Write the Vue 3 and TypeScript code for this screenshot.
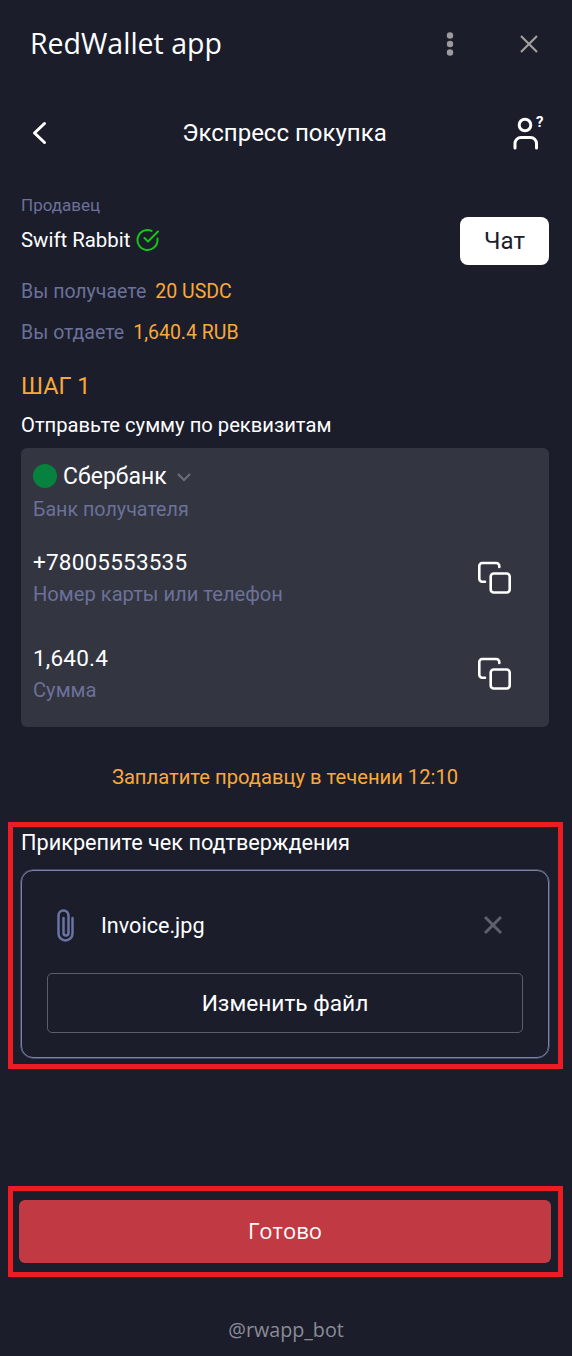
<script setup lang="ts">
const details = [
  { value: '+78005553535', label: 'Номер карты или телефон' },
  { value: '1,640.4', label: 'Сумма' },
]
</script>

<template>
  <div class="page">
    <header class="top">
      <span class="brand">RedWallet app</span>
      <div class="top-actions">
        <svg class="dots" width="10" height="26" viewBox="0 0 10 26"><circle cx="5" cy="4.500" r="3.200" /><circle cx="5" cy="13" r="3.200" /><circle cx="5" cy="21.500" r="3.200" /></svg>
        <svg class="close" width="20" height="20" viewBox="0 0 20 20"><path d="M2 2l16 16M18 2L2 18" /></svg>
      </div>
    </header>

    <nav class="nav">
      <svg width="16" height="26" viewBox="0 0 16 26"><path class="white-line" d="M13.500 3.500L3.500 13l10 9.500" /></svg>
      <span class="nav-title">Экспресс покупка</span>
      <svg class="person" width="32" height="36" viewBox="0 0 32 36">
        <circle class="white-line thin" cx="13" cy="10" r="5.800" />
        <path class="white-line thin" d="M3 33v-4.500a6 6 0 0 1 6-6h9.500a6 6 0 0 1 6 6v4.500" />
        <text x="24" y="11.500" class="q">?</text>
      </svg>
    </nav>

    <main class="content">
      <div class="seller">
        <div>
          <div class="seller-label">Продавец</div>
          <div class="seller-name">
            <span>Swift Rabbit</span>
            <svg width="24" height="24" viewBox="0 0 24 24"><path class="check" d="M21.500 10.500V12a10 10 0 1 1-5.900-9.100M22 3.500L12 13.500l-3.500-3.500" /></svg>
          </div>
        </div>
        <button class="chat">Чат</button>
      </div>

      <div class="sum-row first"><span>Вы получаете</span><b>20 USDC</b></div>
      <div class="sum-row"><span>Вы отдаете</span><b>1,640.4 RUB</b></div>

      <div class="step">ШАГ 1</div>
      <div class="step-text">Отправьте сумму по реквизитам</div>

      <section class="card">
        <div class="bank">
          <i class="bank-dot"></i>
          <span>Сбербанк</span>
          <svg width="16" height="10" viewBox="0 0 16 10"><path class="chev" d="M2 2l6 6 6-6" /></svg>
        </div>
        <div class="muted bank-label">Банк получателя</div>

        <div v-for="d in details" :key="d.label" class="detail">
          <div>
            <div class="value">{{ d.value }}</div>
            <div class="muted detail-label">{{ d.label }}</div>
          </div>
          <svg class="copy" width="36" height="36" viewBox="0 0 36 36">
            <rect x="14.700" y="13.500" width="19" height="19" rx="3" />
            <path d="M9 21.700H6.300a3 3 0 0 1-3-3V6a3 3 0 0 1 3-3h14a3 3 0 0 1 3 3v1" />
          </svg>
        </div>
      </section>

      <div class="timer">Заплатите продавцу в течении 12:10</div>
    </main>

    <section class="mark attach">
      <div class="attach-title">Прикрепите чек подтверждения</div>
      <div class="file-box">
        <div class="file-row">
          <svg class="clip" width="17" height="33" viewBox="0 0 17 33"><path d="M6.500 9v15a2.500 2.500 0 0 0 5 0V6.500a5 5 0 0 0-10 0v18a7 7 0 0 0 14 0V9" /></svg>
          <span class="file-name">Invoice.jpg</span>
          <svg class="x-icon" width="20" height="20" viewBox="0 0 20 20"><path d="M2 2l16 16M18 2L2 18" /></svg>
        </div>
        <button class="change">Изменить файл</button>
      </div>
    </section>

    <section class="mark done-wrap">
      <button class="done">Готово</button>
    </section>

    <footer class="bot">@rwapp_bot</footer>
  </div>
</template>

<style scoped>
.page {
  width: 572px;
  height: 1356px;
  background: #1b1d2b;
  color: #fff;
  font-family: Roboto, "Liberation Sans", sans-serif;
  display: flex;
  flex-direction: column;
  overflow: hidden;
}
button { font-family: inherit; cursor: pointer; }
svg { display: block; flex: none; }
.top {
  height: 88px;
  box-sizing: border-box;
  padding: 0 33px 1px 30px;
  display: flex;
  align-items: center;
  justify-content: space-between;
}
.brand { font: 500 28.500px/1 "Open Sans", sans-serif; }
.top-actions { display: flex; align-items: center; gap: 64px; }
.dots { fill: #9b9b9b; }
.close { fill: none; stroke: #a0a0a0; stroke-width: 2.200; }
.nav {
  height: 90px;
  padding: 0 28px 0 31px;
  display: flex;
  align-items: center;
  justify-content: space-between;
}
.nav-title { font-size: 24px; margin-left: 10px; }
.person { overflow: visible; }
.white-line { fill: none; stroke: #fff; stroke-width: 3; stroke-linecap: round; stroke-linejoin: round; }
.q { fill: #fff; font: 700 15px Roboto, sans-serif; }
.content { padding: 0 23px 0 21px; }
.seller { display: flex; justify-content: space-between; align-items: flex-end; padding-top: 17px; }
.seller-label { color: #6b7199; font-size: 17px; line-height: 20px; }
.seller-name { display: flex; align-items: center; gap: 6px; font-size: 20.400px; line-height: 24px; margin-top: 13px; margin-bottom: 13px; }
.check { fill: none; stroke: #16c416; stroke-width: 2; stroke-linecap: round; stroke-linejoin: round; }
.chat {
  width: 89px; height: 48px; background: #fff; color: #1b1d2b; border: 0; border-radius: 8px; font-size: 24px; padding: 0;
}
.sum-row { display: flex; gap: 9px; font-size: 19.500px; line-height: 24px; color: #6b7199; margin-top: 17px; }
.sum-row.first { margin-top: 15px; }
.sum-row b { font-weight: 400; color: #f9a83b; }
.step { color: #f9a83b; font-size: 23.400px; line-height: 26px; margin-top: 28px; }
.step-text { font-size: 20.200px; line-height: 24px; margin-top: 14px; }
.card {
  background: #333541;
  border-radius: 6px;
  margin-top: 11px;
  height: 279px;
  box-sizing: border-box;
  padding: 16px 12px 0;
}
.bank { display: flex; align-items: center; font-size: 23px; line-height: 26px; }
.bank-dot { width: 24px; height: 24px; border-radius: 50%; background: #07813e; margin-right: 6px; margin-top: -2px; }
.chev { fill: none; stroke: #6c6e7a; stroke-width: 2; }
.bank svg { margin-left: 9px; }
.muted { color: #6b7199; font-size: 20px; line-height: 24px; }
.bank-label { margin-top: 8px; font-size: 19.700px; }
.detail { display: flex; justify-content: space-between; align-items: center; padding-right: 25px; }
.bank-label + .detail { margin-top: 27px; }
.detail + .detail { margin-top: 39px; }
.value { font-size: 22.500px; line-height: 26px; letter-spacing: .2px; }
.detail-label { margin-top: 7px; font-size: 20.150px; }
.copy { fill: none; stroke: #fff; stroke-width: 2.600; stroke-linecap: round; }
.timer { color: #f9a83b; font-size: 20.200px; line-height: 24px; text-align: center; margin-top: 38px; }
.mark { border: 5px solid #ed1c24; margin: 0 9px 0 8px; }
.attach { margin-top: 33px; height: 247px; padding: 4px 9px 0 8px; box-sizing: border-box; }
.attach-title { font-size: 21.700px; line-height: 24px; }
.file-box {
  margin-top: 15px;
  height: 188px;
  box-sizing: border-box;
  border: 1px solid #7b83ad;
  box-shadow: 0 0 0 .5px #6b7199;
  border-radius: 12px;
  padding: 0 25px;
}
.file-row { height: 102px; box-sizing: border-box; padding-top: 6px; display: flex; align-items: center; }
.clip { fill: none; stroke: #6b73a3; stroke-width: 2.500; stroke-linecap: round; margin-left: 10px; }
.file-name { font-size: 21.600px; margin-left: 27px; flex: 1; }
.x-icon { fill: none; stroke: #5e606c; stroke-width: 3; margin-right: 20px; }
.change {
  width: 100%; height: 60px; background: transparent; color: #fff; border: 1px solid #5d5e68; border-radius: 5px; font-size: 22.700px; padding: 0;
}
.done-wrap { margin-top: 117px; height: 91px; box-sizing: border-box; padding: 9px 7px 0 6px; }
.done {
  width: 100%; height: 63px; background: #c13942; color: #fff; border: 0; border-radius: 6px; font: 500 22px "Open Sans", sans-serif; padding: 0 0 4px;
}
.bot { text-align: center; color: #8a8c96; font: 400 19.700px/24px "Open Sans", sans-serif; margin-top: 41px; }
</style>
